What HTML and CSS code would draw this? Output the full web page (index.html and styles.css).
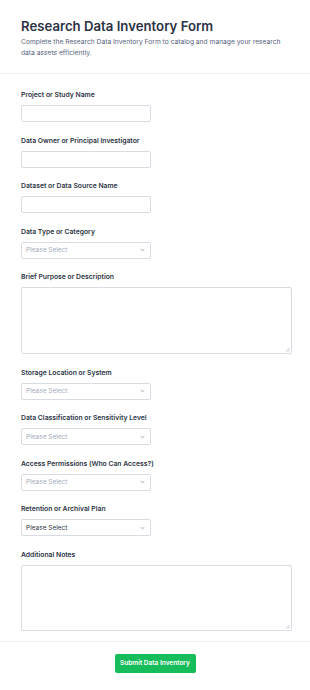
FILE: index.html
```html
<!DOCTYPE html>
<html lang="en">
<head>
<meta charset="utf-8">
<title>Research Data Inventory Form</title>
<link rel="stylesheet" href="styles.css">
</head>
<body>
<div class="page">
  <header class="header">
    <h1 class="title">Research Data Inventory Form</h1>
    <p class="subtitle">Complete the Research Data Inventory Form to catalog and manage your research data assets efficiently.</p>
  </header>
  <form class="form">
    <div class="field">
      <label class="label">Project or Study Name</label>
      <div class="input"></div>
    </div>
    <div class="field">
      <label class="label">Data Owner or Principal Investigator</label>
      <div class="input"></div>
    </div>
    <div class="field">
      <label class="label">Dataset or Data Source Name</label>
      <div class="input"></div>
    </div>
    <div class="field">
      <label class="label">Data Type or Category</label>
      <div class="select"><span class="placeholder">Please Select</span><svg class="chev" viewBox="0 0 6 4" width="5" height="4"><path d="M0.8 0.8 L3 3 L5.2 0.8" fill="none" stroke="#8c95a8" stroke-width="1"/></svg></div>
    </div>
    <div class="field">
      <label class="label">Brief Purpose or Description</label>
      <div class="textarea"><svg class="grip" viewBox="0 0 5 5" width="5" height="5"><path d="M4.5 1 L1 4.5 M4.5 3 L3 4.5" stroke="#b4b9c4" stroke-width="0.8"/></svg></div>
    </div>
    <div class="field">
      <label class="label">Storage Location or System</label>
      <div class="select"><span class="placeholder">Please Select</span><svg class="chev" viewBox="0 0 6 4" width="5" height="4"><path d="M0.8 0.8 L3 3 L5.2 0.8" fill="none" stroke="#8c95a8" stroke-width="1"/></svg></div>
    </div>
    <div class="field">
      <label class="label">Data Classification or Sensitivity Level</label>
      <div class="select"><span class="placeholder">Please Select</span><svg class="chev" viewBox="0 0 6 4" width="5" height="4"><path d="M0.8 0.8 L3 3 L5.2 0.8" fill="none" stroke="#8c95a8" stroke-width="1"/></svg></div>
    </div>
    <div class="field">
      <label class="label">Access Permissions (Who Can Access?)</label>
      <div class="select"><span class="placeholder">Please Select</span><svg class="chev" viewBox="0 0 6 4" width="5" height="4"><path d="M0.8 0.8 L3 3 L5.2 0.8" fill="none" stroke="#8c95a8" stroke-width="1"/></svg></div>
    </div>
    <div class="field">
      <label class="label">Retention or Archival Plan</label>
      <div class="select"><span class="value">Please Select</span><svg class="chev" viewBox="0 0 6 4" width="5" height="4"><path d="M0.8 0.8 L3 3 L5.2 0.8" fill="none" stroke="#8c95a8" stroke-width="1"/></svg></div>
    </div>
    <div class="field">
      <label class="label">Additional Notes</label>
      <div class="textarea notes"><svg class="grip" viewBox="0 0 5 5" width="5" height="5"><path d="M4.5 1 L1 4.5 M4.5 3 L3 4.5" stroke="#b4b9c4" stroke-width="0.8"/></svg></div>
    </div>
  </form>
  <div class="footer">
    <button class="submit" type="button">Submit Data Inventory</button>
  </div>
</div>
</body>
</html>
```
FILE: styles.css
```css
* { box-sizing: border-box; }
html, body { margin: 0; padding: 0; background: #fff; }
body { font-family: Inter, "Noto Sans", sans-serif; color: #2c3345; }
.page { width: 310px; height: 690px; }
.header {
  padding: 17px 21px 0;
  height: 74px;
  border-bottom: 1px solid #eceef2;
}
.title {
  margin: 0;
  font-size: 13.2px;
  line-height: 18px;
  font-weight: 600;
  color: #2c3345;
}
.subtitle {
  margin: 2px 0 0;
  font-size: 6.7px;
  line-height: 10.5px;
  color: #57647e;
}
.form {
  display: flex;
  flex-direction: column;
  gap: 13.5px;
  padding: 16px 21px 10px;
  border-bottom: 1px solid #eceef2;
}
.field { display: flex; flex-direction: column; }
.label {
  font-size: 6.8px;
  line-height: 10px;
  font-weight: 600;
  color: #2c3345;
  margin-bottom: 5px;
}
.input, .select {
  width: 130px;
  height: 17px;
  border: 1px solid #d8dce3;
  border-radius: 2px;
  background: #fff;
}
.select {
  display: flex;
  align-items: center;
  justify-content: space-between;
  padding: 0 5px 0 4px;
  font-size: 6.5px;
}
.placeholder { color: #a3aabb; }
.value { color: #2c3345; }
.chev { display: block; }
.textarea {
  width: 271px;
  height: 67px;
  border: 1px solid #d8dce3;
  border-radius: 2px;
  display: flex;
  align-items: flex-end;
  justify-content: flex-end;
  padding: 1px;
}
.textarea.notes { height: 66px; }
.grip { display: block; }
.footer {
  display: flex;
  justify-content: center;
  padding-top: 12px;
}
.submit {
  width: 81px;
  height: 19px;
  border: 0;
  border-radius: 2px;
  background: #18bd5b;
  color: #fff;
  font-family: Inter, "Noto Sans", sans-serif;
  font-size: 6.5px;
  font-weight: 600;
  padding: 0;
}
```
